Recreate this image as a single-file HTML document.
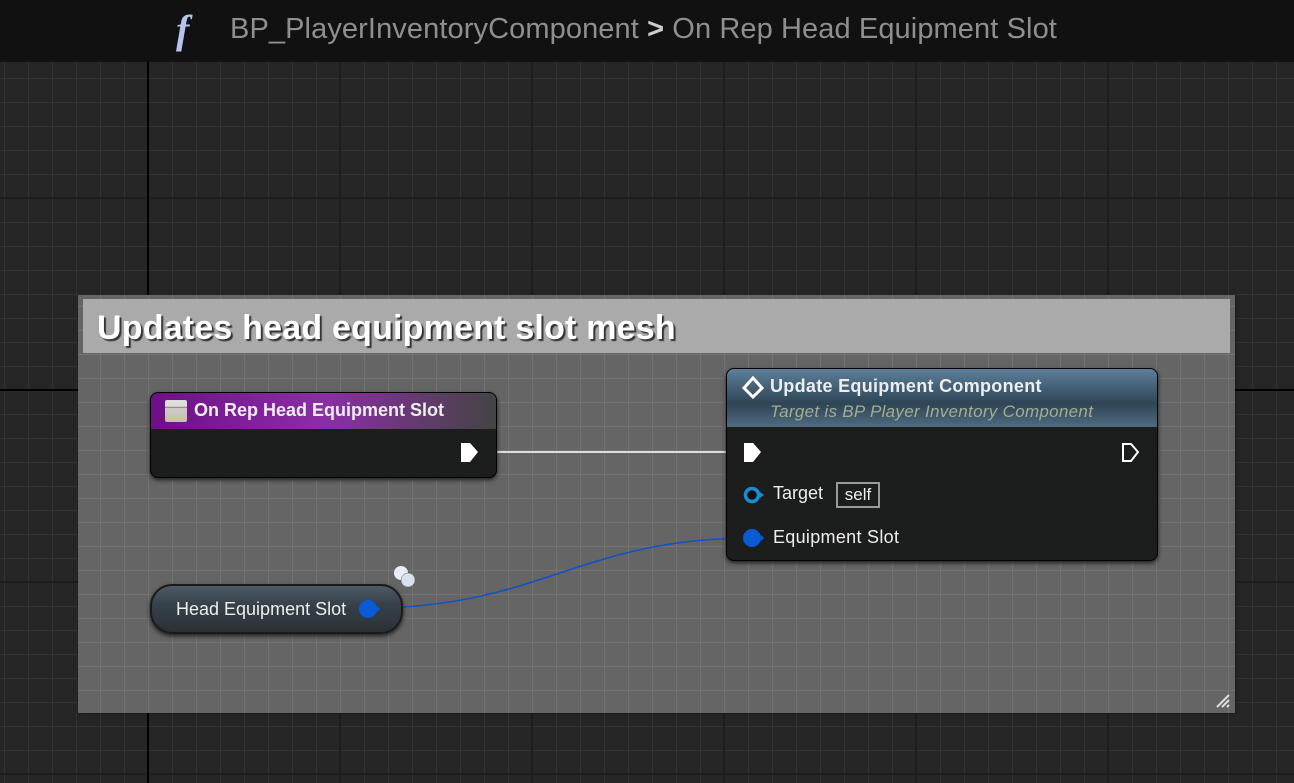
<!DOCTYPE html>
<html><head><meta charset="utf-8"><style>
*{margin:0;padding:0;box-sizing:border-box}
body{width:1294px;height:783px;overflow:hidden;position:relative;font-family:"Liberation Sans","DejaVu Sans",sans-serif;
background-color:#262626;
background-image:
linear-gradient(to right,transparent 147px,#000 147px,#000 149px,transparent 149px),
linear-gradient(to bottom,transparent 389px,#000 389px,#000 391px,transparent 391px),
linear-gradient(to right,#1e1e1e 2px,transparent 2px),
linear-gradient(to bottom,#1e1e1e 2px,transparent 2px),
linear-gradient(to right,#333 1px,transparent 1px),
linear-gradient(to bottom,#333 1px,transparent 1px);
background-size:100% 100%,100% 100%,192px 192px,192px 192px,24px 24px,24px 24px;
background-position:0 0,0 0,147px 197px,147px 197px,4px 6px,4px 6px;}
.top{position:absolute;left:0;top:0;width:1294px;height:62px;background:#111;}
.top .t{position:absolute;left:230px;top:13px;font-size:29px;color:#8f8f8f;letter-spacing:0.1px;}
.cm{position:absolute;left:78px;top:295px;width:1157px;height:418px;background-color:#656565;
background-image:linear-gradient(to right,#737373 1px,transparent 1px),linear-gradient(to bottom,#737373 1px,transparent 1px);
background-size:24px 24px;background-position:-2px 11px;box-shadow:0 0 4px rgba(0,0,0,.5);}
.cmh{position:absolute;left:5px;top:4px;width:1147px;height:54px;background:#aaa;}
.cmh span{position:absolute;left:14px;top:10px;font-size:34px;font-weight:bold;color:#fff;text-shadow:2px 2px 1px #333;letter-spacing:0.2px;}
.node{position:absolute;background:#1c1e1d;border-radius:8px;box-shadow:0 2px 4px rgba(0,0,0,.7);border:1px solid #000;}
.lbl{position:absolute;color:#eee;font-size:18px;}
</style></head><body>
<div class="top">
<div style="position:absolute;left:176px;top:6px;font:italic bold 40px 'Liberation Serif',serif;color:#b8c4ee;">f</div>
<div class="t">BP_PlayerInventoryComponent <span style="font-weight:bold;color:#ccc">&gt;</span> On Rep Head Equipment Slot</div>
</div>
<div class="cm"><div class="cmh"><span>Updates head equipment slot mesh</span></div>
<svg style="position:absolute;right:4px;bottom:4px" width="20" height="20"><path d="M18 6L6 18M18 11L11 18M18 16L16 18" stroke="#ddd" stroke-width="2"/></svg>
</div>
<svg style="position:absolute;left:0;top:0" width="1294" height="783">
<path d="M478 452L750 452" stroke="#ddd" stroke-width="2"/>
<path d="M368 608C540 608 580 538 752 538" stroke="#1050c8" stroke-width="1.5" fill="none"/>
</svg>
<div class="node" style="left:150px;top:392px;width:347px;height:86px;">
<div style="position:absolute;left:0;top:0;width:345px;height:36px;border-radius:7px 7px 0 0;background:linear-gradient(to right,#6e0f87,#8b2ea6 50%,#444 100%);"></div>
<div style="position:absolute;left:14px;top:7px;width:22px;height:22px;background:linear-gradient(#ddd 0,#ddd 30%,#a55 32%,#ccc 38%,#c8bfa5);border-radius:2px;"></div>
<div class="lbl" style="left:43px;top:7px;font-weight:bold;">On Rep Head Equipment Slot</div>
<svg style="position:absolute;left:308px;top:49px" width="22" height="22"><path d="M2 1H11L19 10L11 20H2Z" fill="#fff"/></svg>
</div>
<div class="node" style="left:726px;top:368px;width:432px;height:193px;">
<div style="position:absolute;left:0;top:0;width:430px;height:58px;border-radius:7px 7px 0 0;background:linear-gradient(#5d7f9b,#2e4556 60%,#4f6b80);"></div>
<svg style="position:absolute;left:14px;top:7px" width="24" height="24"><path d="M12 2L21 12L12 21L3 12Z" fill="none" stroke="#fff" stroke-width="3"/></svg>
<div class="lbl" style="left:43px;top:7px;font-weight:bold;letter-spacing:0.3px;">Update Equipment Component</div>
<div class="lbl" style="left:43px;top:33px;font-style:italic;color:#a5ad8e;font-size:17px;letter-spacing:0.3px;">Target is BP Player Inventory Component</div>
<svg style="position:absolute;left:15px;top:73px" width="22" height="22"><path d="M2 1H11L19 10L11 20H2Z" fill="#fff"/></svg>
<svg style="position:absolute;left:393px;top:73px" width="22" height="22"><path d="M3 2H11L18 10L11 19H3Z" fill="none" stroke="#fff" stroke-width="2"/></svg>
<svg style="position:absolute;left:15px;top:115px" width="26" height="22"><circle cx="10" cy="11" r="6.5" fill="#111" stroke="#1b8cd0" stroke-width="3.5"/><path d="M18 8L22 11L18 14Z" fill="#1b8cd0"/></svg>
<div class="lbl" style="left:46px;top:114px;">Target</div>
<div style="position:absolute;left:109px;top:113px;width:44px;height:26px;border:2px solid #999;color:#eee;font-size:17px;text-align:center;line-height:22px;">self</div>
<svg style="position:absolute;left:15px;top:158px" width="26" height="22"><circle cx="10" cy="11" r="9" fill="#0a5ad6"/><path d="M19 8L22 11L19 14Z" fill="#0a5ad6"/></svg>
<div class="lbl" style="left:46px;top:158px;letter-spacing:0.3px;">Equipment Slot</div>
</div>
<div style="position:absolute;left:150px;top:584px;width:253px;height:50px;border-radius:22px;background:linear-gradient(#4f5a66,#36414a 40%,#2c3035);border:2px solid #1a1a1a;box-shadow:0 2px 4px rgba(0,0,0,.7);">
<div class="lbl" style="left:24px;top:13px;font-size:18px;">Head Equipment Slot</div>
<svg style="position:absolute;left:206px;top:12px" width="26" height="22"><circle cx="10" cy="11" r="9" fill="#0a5ad6"/><path d="M19 8L22 11L19 14Z" fill="#0a5ad6"/></svg>
</div>
<svg style="position:absolute;left:390px;top:562px" width="32" height="30"><circle cx="11" cy="11" r="7" fill="#e8eef5"/><circle cx="18" cy="18" r="7" fill="#d8e2ee" stroke="#666" stroke-width=".5"/></svg>
</body></html>
